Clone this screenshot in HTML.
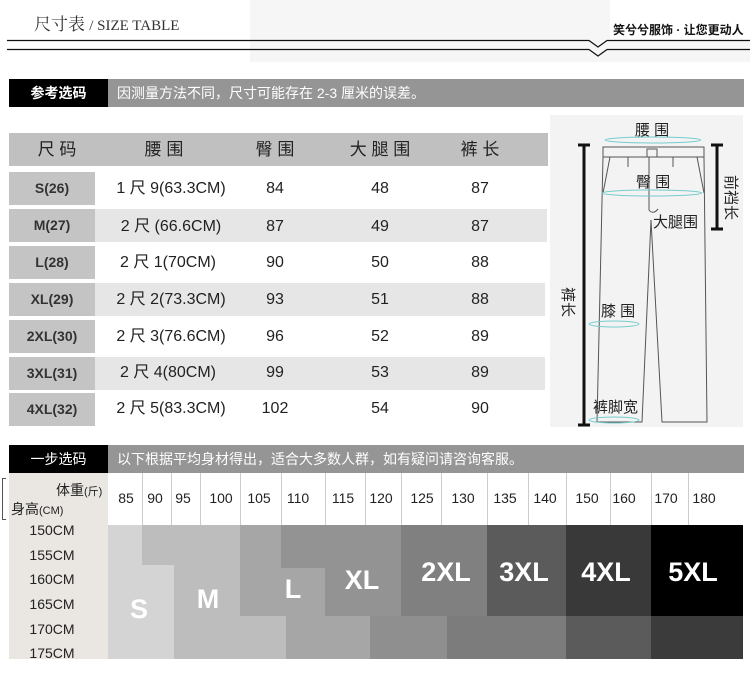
<!DOCTYPE html>
<html><head><meta charset="utf-8"><style>
*{margin:0;padding:0;box-sizing:border-box}
body{width:750px;height:677px;background:#fff;position:relative;overflow:hidden;font-family:"Liberation Sans","Noto Sans CJK SC",sans-serif}
.a{position:absolute}
.c{position:absolute;text-align:center;transform:translateX(-50%);white-space:nowrap}
.bar{position:absolute;left:9px;width:735px;height:28px;background:#959595;color:#fff;font-size:14px}
.bar .k{position:absolute;left:0;top:0;width:99px;height:28px;background:#000;text-align:center;line-height:28px;font-weight:bold}
.bar .t{position:absolute;left:108px;top:0;line-height:28px}
.sz{position:absolute;left:9px;width:86px;height:33px;background:#c4c4c4;font-weight:bold;font-size:14px;color:#333;text-align:center;line-height:33px}
.td{font-size:16px;color:#222;line-height:33px;height:33px}
.L{position:absolute;color:#fff;font-weight:bold;font-size:27px;transform:translateX(-50%)}
</style></head><body>
<div class="a" style="left:250px;top:0;width:360px;height:62px;background:#f6f6f6"></div>
<div class="a" style="left:610px;top:40px;width:140px;height:22px;background:#f6f6f6"></div>
<div class="a" style="left:34px;top:10px;font-family:'Liberation Serif','Noto Serif CJK SC',serif;font-size:17px;color:#333;background:#fff;padding-right:6px">尺寸表 <span style="font-size:15px">/ SIZE TABLE</span></div>
<div class="a" style="left:613px;top:21px;font-size:12px;font-weight:bold;color:#111">笑兮兮服饰 · 让您更动人</div>
<svg class="a" style="left:0;top:0" width="750" height="62">
<path d="M7 40.5H589L598 47L607 40.5H750" fill="none" stroke="#111" stroke-width="1.2"/>
<path d="M7 49.5H589L598 56L607 49.5H750" fill="none" stroke="#111" stroke-width="1.2"/>
</svg>
<div class="bar" style="top:79px"><div class="k">参考选码</div><div class="t">因测量方法不同，尺寸可能存在 2-3 厘米的误差。</div></div>

<div class="a" style="left:9px;top:133px;width:539px;height:33px;background:#c0c0c0"></div>
<div class="c td" style="left:57px;top:133px;font-size:17px">尺 码</div>
<div class="c td" style="left:164px;top:133px;font-size:17px">腰 围</div>
<div class="c td" style="left:275px;top:133px;font-size:17px">臀 围</div>
<div class="c td" style="left:380px;top:133px;font-size:17px">大 腿 围</div>
<div class="c td" style="left:480px;top:133px;font-size:17px">裤 长</div>

<div class="a" style="left:95px;top:209px;width:452px;height:33px;background:#e6e6e6"></div>
<div class="a" style="left:95px;top:283px;width:450px;height:33px;background:#e6e6e6"></div>
<div class="a" style="left:95px;top:357px;width:450px;height:33px;background:#e6e6e6"></div>

<div class="sz" style="top:172px">S(26)</div>
<div class="sz" style="top:209px">M(27)</div>
<div class="sz" style="top:246px">L(28)</div>
<div class="sz" style="top:283px">XL(29)</div>
<div class="sz" style="top:320px">2XL(30)</div>
<div class="sz" style="top:357px">3XL(31)</div>
<div class="sz" style="top:393px">4XL(32)</div>

<div class="c td" style="left:171px;top:172px">1 尺 9(63.3CM)</div><div class="c td" style="left:275px;top:172px">84</div><div class="c td" style="left:380px;top:172px">48</div><div class="c td" style="left:480px;top:172px">87</div>
<div class="c td" style="left:171px;top:210px">2 尺 (66.6CM)</div><div class="c td" style="left:275px;top:210px">87</div><div class="c td" style="left:380px;top:210px">49</div><div class="c td" style="left:480px;top:210px">87</div>
<div class="c td" style="left:168px;top:246px">2 尺 1(70CM)</div><div class="c td" style="left:275px;top:246px">90</div><div class="c td" style="left:380px;top:246px">50</div><div class="c td" style="left:480px;top:246px">88</div>
<div class="c td" style="left:171px;top:283px">2 尺 2(73.3CM)</div><div class="c td" style="left:275px;top:283px">93</div><div class="c td" style="left:380px;top:283px">51</div><div class="c td" style="left:480px;top:283px">88</div>
<div class="c td" style="left:171px;top:320px">2 尺 3(76.6CM)</div><div class="c td" style="left:275px;top:320px">96</div><div class="c td" style="left:380px;top:320px">52</div><div class="c td" style="left:480px;top:320px">89</div>
<div class="c td" style="left:168px;top:356px">2 尺 4(80CM)</div><div class="c td" style="left:275px;top:356px">99</div><div class="c td" style="left:380px;top:356px">53</div><div class="c td" style="left:480px;top:356px">89</div>
<div class="c td" style="left:171px;top:392px">2 尺 5(83.3CM)</div><div class="c td" style="left:275px;top:392px">102</div><div class="c td" style="left:380px;top:392px">54</div><div class="c td" style="left:480px;top:392px">90</div>

<svg class="a" style="left:550px;top:115px" width="193" height="312" font-family="'Liberation Sans','Noto Sans CJK SC',sans-serif" font-size="15" fill="#222">
<rect width="193" height="312" fill="#f3f3f3"/>
<g fill="none" stroke="#555" stroke-width="1">
<path d="M53 32H154V42H53Z"/>
<path d="M53 42L47 307H92L101 105L112 307H157L154 42"/>
<path d="M99 42V95Q103 100 108 94"/>
<rect x="97" y="34" width="10" height="8"/>
<path d="M78 42V52M123 42V52"/>
<path d="M60 42L53 78M147 42L154 78"/>
</g>
<g fill="none" stroke="#7cc" stroke-width="1">
<ellipse cx="103" cy="25" rx="48" ry="3"/><ellipse cx="102" cy="78" rx="50" ry="3"/>
<ellipse cx="64" cy="209" rx="25" ry="3"/><ellipse cx="64" cy="305" rx="25" ry="3"/>
</g>
<g stroke="#111" stroke-width="3"><path d="M34 30V310M28 30H40M28 310H40M167 30V114M161 30H173M161 114H173"/></g>
<text x="85" y="20">腰 围</text><text x="86" y="72">臀 围</text><text x="103" y="112">大腿围</text>
<text x="51" y="201">膝 围</text><text x="43" y="297">裤脚宽</text>
<text transform="translate(13,172) rotate(90)">裤长</text>
<text transform="translate(176,60) rotate(90)">前裆长</text>
</svg>

<div class="bar" style="top:445px"><div class="k" style="font-weight:normal">一步选码</div><div class="t">以下根据平均身材得出，适合大多数人群，如有疑问请咨询客服。</div></div>

<div class="a" style="left:9px;top:473px;width:99px;height:186px;background:#eae6e1"></div>
<div class="a" style="left:56px;top:480px;font-size:14px;color:#222">体重<span style="font-size:11px">(斤)</span></div>
<div class="a" style="left:11px;top:499px;font-size:14px;color:#222">身高<span style="font-size:11px">(CM)</span></div>
<div class="a" style="left:2px;top:478px;width:4px;height:42px;border:1px solid #555;border-right:none"></div>
<div class="c" style="left:52px;top:522px;font-size:14px;color:#222">150CM</div>
<div class="c" style="left:52px;top:547px;font-size:14px;color:#222">155CM</div>
<div class="c" style="left:52px;top:571px;font-size:14px;color:#222">160CM</div>
<div class="c" style="left:52px;top:596px;font-size:14px;color:#222">165CM</div>
<div class="c" style="left:52px;top:621px;font-size:14px;color:#222">170CM</div>
<div class="c" style="left:52px;top:645px;font-size:14px;color:#222">175CM</div>

<svg class="a" style="left:0;top:473px" width="750" height="52"><g stroke="#ccc"><path d="M142.5 0V52M171.5 0V52M200.5 0V52M240.5 0V52M281.5 0V52M325.5 0V52M365.5 0V52M401.5 0V52M441.5 0V52M487.5 0V52M528.5 0V52M566.5 0V52M610.5 0V52M651.5 0V52M688.5 0V52"/></g>
<g font-size="14" fill="#222" text-anchor="middle" font-family="'Liberation Sans',sans-serif">
<text x="126" y="30">85</text><text x="155" y="30">90</text><text x="183" y="30">95</text><text x="221" y="30">100</text><text x="259" y="30">105</text><text x="298" y="30">110</text><text x="343" y="30">115</text><text x="381" y="30">120</text><text x="422" y="30">125</text><text x="463" y="30">130</text><text x="505" y="30">135</text><text x="545" y="30">140</text><text x="587" y="30">150</text><text x="624" y="30">160</text><text x="666" y="30">170</text><text x="704" y="30">180</text></g></svg>

<svg class="a" style="left:0;top:0" width="750" height="677">
<rect x="108" y="525" width="34" height="134" fill="#d4d4d4"/>
<rect x="142" y="565" width="32" height="94" fill="#d4d4d4"/>
<rect x="142" y="525" width="98" height="40" fill="#bdbdbd"/>
<rect x="174" y="565" width="66" height="51" fill="#bdbdbd"/>
<rect x="174" y="616" width="112" height="43" fill="#bdbdbd"/>
<rect x="240" y="525" width="41" height="91" fill="#a6a6a6"/>
<rect x="281" y="568" width="44" height="48" fill="#a6a6a6"/>
<rect x="286" y="616" width="84" height="43" fill="#a6a6a6"/>
<rect x="281" y="525" width="120" height="43" fill="#939393"/>
<rect x="325" y="568" width="76" height="48" fill="#939393"/>
<rect x="370" y="616" width="77" height="43" fill="#8f8f8f"/>
<rect x="401" y="525" width="86" height="91" fill="#808080"/>
<rect x="447" y="616" width="119" height="43" fill="#7c7c7c"/>
<rect x="487" y="525" width="79" height="91" fill="#5b5b5b"/>
<rect x="566" y="525" width="85" height="91" fill="#393939"/>
<rect x="566" y="616" width="85" height="43" fill="#5b5b5b"/>
<rect x="651" y="525" width="92" height="91" fill="#000"/>
<rect x="651" y="616" width="92" height="43" fill="#3b3b3b"/>
</svg>
<div class="L" style="left:139px;top:594px">S</div>
<div class="L" style="left:208px;top:584px">M</div>
<div class="L" style="left:293px;top:574px">L</div>
<div class="L" style="left:362px;top:565px">XL</div>
<div class="L" style="left:446px;top:557px">2XL</div>
<div class="L" style="left:524px;top:557px">3XL</div>
<div class="L" style="left:606px;top:557px">4XL</div>
<div class="L" style="left:693px;top:557px">5XL</div>
</body></html>
